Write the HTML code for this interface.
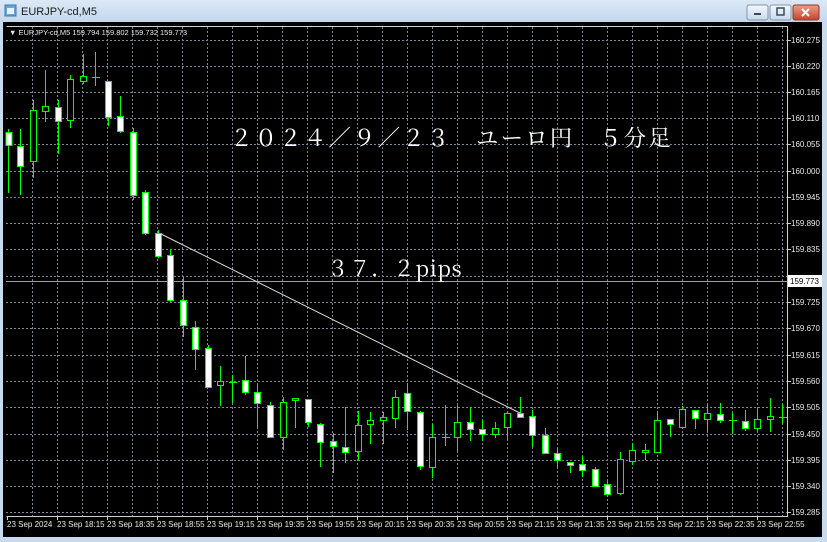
<!DOCTYPE html>
<html><head><meta charset="utf-8"><style>
html,body{margin:0;padding:0;width:827px;height:542px;overflow:hidden;background:#cfdff0}
svg{display:block}
</style></head><body>
<svg width="827" height="542" xmlns="http://www.w3.org/2000/svg" font-family="Liberation Sans, sans-serif">
<defs><linearGradient id="tb" x1="0" y1="0" x2="0" y2="1"><stop offset="0" stop-color="#dce9f6"/><stop offset="1" stop-color="#c4d7ec"/></linearGradient>
<linearGradient id="bt" x1="0" y1="0" x2="0" y2="1"><stop offset="0" stop-color="#f4f8fc"/><stop offset="1" stop-color="#c9d9ea"/></linearGradient>
<linearGradient id="cl" x1="0" y1="0" x2="0" y2="1"><stop offset="0" stop-color="#e8a08c"/><stop offset="1" stop-color="#c7432a"/></linearGradient></defs>
<rect x="0" y="0" width="827" height="542" fill="#c8dbee"/>
<rect x="0" y="0" width="827" height="22" fill="url(#tb)"/>
<rect x="5" y="5" width="11" height="11" fill="#6aa6d8" stroke="#3a78b0"/>
<rect x="7" y="8" width="7" height="6" fill="#e8f2fb"/>
<text x="21" y="15" font-size="11" fill="#1a1a1a">EURJPY-cd,M5</text>
<rect x="747" y="5" width="21" height="15" rx="2" fill="url(#bt)" stroke="#8296ae"/>
<rect x="754" y="13" width="7" height="2" fill="#3a4a5e"/>
<rect x="770" y="5" width="21" height="15" rx="2" fill="url(#bt)" stroke="#8296ae"/>
<rect x="777" y="8" width="7" height="7" fill="none" stroke="#3a4a5e" stroke-width="1.5"/>
<rect x="793" y="5" width="26" height="15" rx="2" fill="url(#cl)" stroke="#8a3a2a"/>
<path d="M802 9l7 7M809 9l-7 7" stroke="#fff" stroke-width="2"/>
<rect x="3" y="22" width="819" height="515" fill="#000"/>
<g stroke="#7c8694" stroke-width="1" stroke-dasharray="2,2">
<path d="M6 40.5H787M6 66.5H787M6 92.5H787M6 118.5H787M6 144.5H787M6 171.5H787M6 197.5H787M6 223.5H787M6 249.5H787M6 276.5H787M6 302.5H787M6 328.5H787M6 355.5H787M6 381.5H787M6 407.5H787M6 434.5H787M6 460.5H787M6 486.5H787M6 512.5H787"/>
<path d="M32.5 27V516M57.5 27V516M82.5 27V516M107.5 27V516M132.5 27V516M157.5 27V516M182.5 27V516M207.5 27V516M232.5 27V516M257.5 27V516M282.5 27V516M307.5 27V516M332.5 27V516M357.5 27V516M382.5 27V516M407.5 27V516M432.5 27V516M457.5 27V516M482.5 27V516M507.5 27V516M532.5 27V516M557.5 27V516M582.5 27V516M607.5 27V516M632.5 27V516M657.5 27V516M682.5 27V516M707.5 27V516M732.5 27V516M757.5 27V516M782.5 27V516"/>
</g>
<path d="M6 281.5H787" stroke="#9aa0a8"/>
<path d="M6.5 26.5H787.5V516.5H6.5" fill="none" stroke="#d0d0d0"/>
<g stroke="#d0d0d0"><path d="M787 40.5h4M787 66.5h4M787 92.5h4M787 118.5h4M787 144.5h4M787 171.5h4M787 197.5h4M787 223.5h4M787 249.5h4M787 302.5h4M787 328.5h4M787 355.5h4M787 381.5h4M787 407.5h4M787 434.5h4M787 460.5h4M787 486.5h4M787 512.5h4"/>
<path d="M7.5 516v4M57.5 516v4M107.5 516v4M157.5 516v4M207.5 516v4M257.5 516v4M307.5 516v4M357.5 516v4M407.5 516v4M457.5 516v4M507.5 516v4M557.5 516v4M607.5 516v4M657.5 516v4M707.5 516v4M757.5 516v4"/></g>
<g font-size="8" fill="#e8e8e8">
<text x="791" y="43">160.275</text><text x="791" y="69">160.220</text><text x="791" y="95">160.165</text><text x="791" y="121">160.110</text><text x="791" y="147">160.055</text><text x="791" y="174">160.000</text><text x="791" y="200">159.945</text><text x="791" y="226">159.890</text><text x="791" y="252">159.835</text><text x="791" y="305">159.725</text><text x="791" y="331">159.670</text><text x="791" y="358">159.615</text><text x="791" y="384">159.560</text><text x="791" y="410">159.505</text><text x="791" y="437">159.450</text><text x="791" y="463">159.395</text><text x="791" y="489">159.340</text><text x="791" y="515">159.285</text>
<text x="7" y="527">23 Sep 2024</text><text x="57" y="527">23 Sep 18:15</text><text x="107" y="527">23 Sep 18:35</text><text x="157" y="527">23 Sep 18:55</text><text x="207" y="527">23 Sep 19:15</text><text x="257" y="527">23 Sep 19:35</text><text x="307" y="527">23 Sep 19:55</text><text x="357" y="527">23 Sep 20:15</text><text x="407" y="527">23 Sep 20:35</text><text x="457" y="527">23 Sep 20:55</text><text x="507" y="527">23 Sep 21:15</text><text x="557" y="527">23 Sep 21:35</text><text x="607" y="527">23 Sep 21:55</text><text x="657" y="527">23 Sep 22:15</text><text x="707" y="527">23 Sep 22:35</text><text x="757" y="527">23 Sep 22:55</text>
<text x="9" y="35" font-size="7.5">▼ EURJPY-cd,M5  159.794 159.802 159.732 159.773</text>
</g>
<rect x="788" y="275" width="34" height="12" fill="#fff"/>
<text x="790" y="284" font-size="8" fill="#000">159.773</text>
<g stroke="#00ff00" stroke-width="1">
<path d="M8.5 129V193M20.5 129V195M33.5 100V178M45.5 70V122M58.5 100V154M70.5 75V128M83.5 54V84M95.5 52V86M108.5 81V126M120.5 96V133M133.5 128V200M145.5 190V235M158.5 230V258M170.5 250V302M183.5 277V337M195.5 321V370M208.5 345V387M220.5 366V406M232.5 375V403M245.5 356V395M257.5 383V427M270.5 402V437M283.5 397V450M295.5 398V428M308.5 399V427M320.5 423V467M333.5 433V473M345.5 407V463M358.5 411V460M370.5 412V444M383.5 412V444M395.5 390V428M407.5 383V430M420.5 411V470M432.5 424V478M445.5 405V446M457.5 405V451M470.5 407V441M482.5 420V441M495.5 422V438M507.5 412V440M520.5 397V417M532.5 410V447M545.5 428V453M557.5 447V468M570.5 462V473M582.5 456V477M595.5 467V486M607.5 481V497M620.5 452V495M632.5 443V465M645.5 444V460M657.5 411V452M670.5 419V437M682.5 406V427M695.5 410V429M707.5 405V431M720.5 403V423M732.5 413V434M745.5 410V431M757.5 409V431M770.5 398V432M782.5 404V423"/>
<path d="M92 77.5h8M229 382.5h8M442 437.5h8M729 420.5h8M779 417.5h8"/>
<g fill="#fff">
<rect x="6" y="132.5" width="6" height="13"/><rect x="17.5" y="146.5" width="6" height="20"/><rect x="55.5" y="107.5" width="6" height="14"/><rect x="105.5" y="81.5" width="6" height="36"/><rect x="117.5" y="116.5" width="6" height="15"/><rect x="130.5" y="132.5" width="6" height="63"/><rect x="142.5" y="192.5" width="6" height="41"/><rect x="155.5" y="233.5" width="6" height="23"/><rect x="167.5" y="255.5" width="6" height="45"/><rect x="180.5" y="300.5" width="6" height="25"/><rect x="192.5" y="327.5" width="6" height="22"/><rect x="205.5" y="348.5" width="6" height="39"/><rect x="242.5" y="380.5" width="6" height="12"/><rect x="254.5" y="392.5" width="6" height="11"/><rect x="267.5" y="405.5" width="6" height="32"/><rect x="305.5" y="399.5" width="6" height="23"/><rect x="317.5" y="424.5" width="6" height="18"/><rect x="330.5" y="441.5" width="6" height="5"/><rect x="342.5" y="447.5" width="6" height="5"/><rect x="404.5" y="393.5" width="6" height="18"/><rect x="417.5" y="412.5" width="6" height="54"/><rect x="467.5" y="422.5" width="6" height="7"/><rect x="479.5" y="429.5" width="6" height="5"/><rect x="517.5" y="413.5" width="6" height="4"/><rect x="529.5" y="416.5" width="6" height="19"/><rect x="542.5" y="435.5" width="6" height="18"/><rect x="554.5" y="453.5" width="6" height="7"/><rect x="567.5" y="462.5" width="6" height="3"/><rect x="579.5" y="464.5" width="6" height="6"/><rect x="592.5" y="469.5" width="6" height="17"/><rect x="604.5" y="484.5" width="6" height="10"/><rect x="667.5" y="419.5" width="6" height="5"/><rect x="692.5" y="410.5" width="6" height="8"/><rect x="717.5" y="414.5" width="6" height="6"/><rect x="742.5" y="421.5" width="6" height="7"/>
</g>
<g fill="#000">
<rect x="30.5" y="110.5" width="6" height="51"/><rect x="42.5" y="106.5" width="6" height="5"/><rect x="67.5" y="79.5" width="6" height="41"/><rect x="80.5" y="76.5" width="6" height="5"/><rect x="217.5" y="381.5" width="6" height="4"/><rect x="280.5" y="402.5" width="6" height="35"/><rect x="292.5" y="398.5" width="6" height="2"/><rect x="355.5" y="425.5" width="6" height="26"/><rect x="367.5" y="420.5" width="6" height="4"/><rect x="380.5" y="417.5" width="6" height="3"/><rect x="392.5" y="397.5" width="6" height="21"/><rect x="429.5" y="437.5" width="6" height="30"/><rect x="454.5" y="422.5" width="6" height="15"/><rect x="492.5" y="428.5" width="6" height="6"/><rect x="504.5" y="413.5" width="6" height="14"/><rect x="617.5" y="459.5" width="6" height="34"/><rect x="629.5" y="450.5" width="6" height="11"/><rect x="642.5" y="450.5" width="6" height="2"/><rect x="654.5" y="420.5" width="6" height="32"/><rect x="679.5" y="409.5" width="6" height="18"/><rect x="704.5" y="413.5" width="6" height="6"/><rect x="754.5" y="419.5" width="6" height="9"/><rect x="767.5" y="416.5" width="6" height="3"/>
</g></g>
<path d="M161 234L520 413" stroke="#d8d8d8" stroke-width="1"/>
<text x="230" y="146" font-size="22.5" fill="#fff" letter-spacing="2.1" font-family="Noto Serif CJK SC, Liberation Serif, serif">２０２４／９／２３　ユーロ円　５分足</text>
<text x="327" y="276" font-size="21.5" fill="#fff" letter-spacing="0.6" font-family="Noto Serif CJK SC, Liberation Serif, serif">３７．２pips</text>
</svg>
</body></html>
